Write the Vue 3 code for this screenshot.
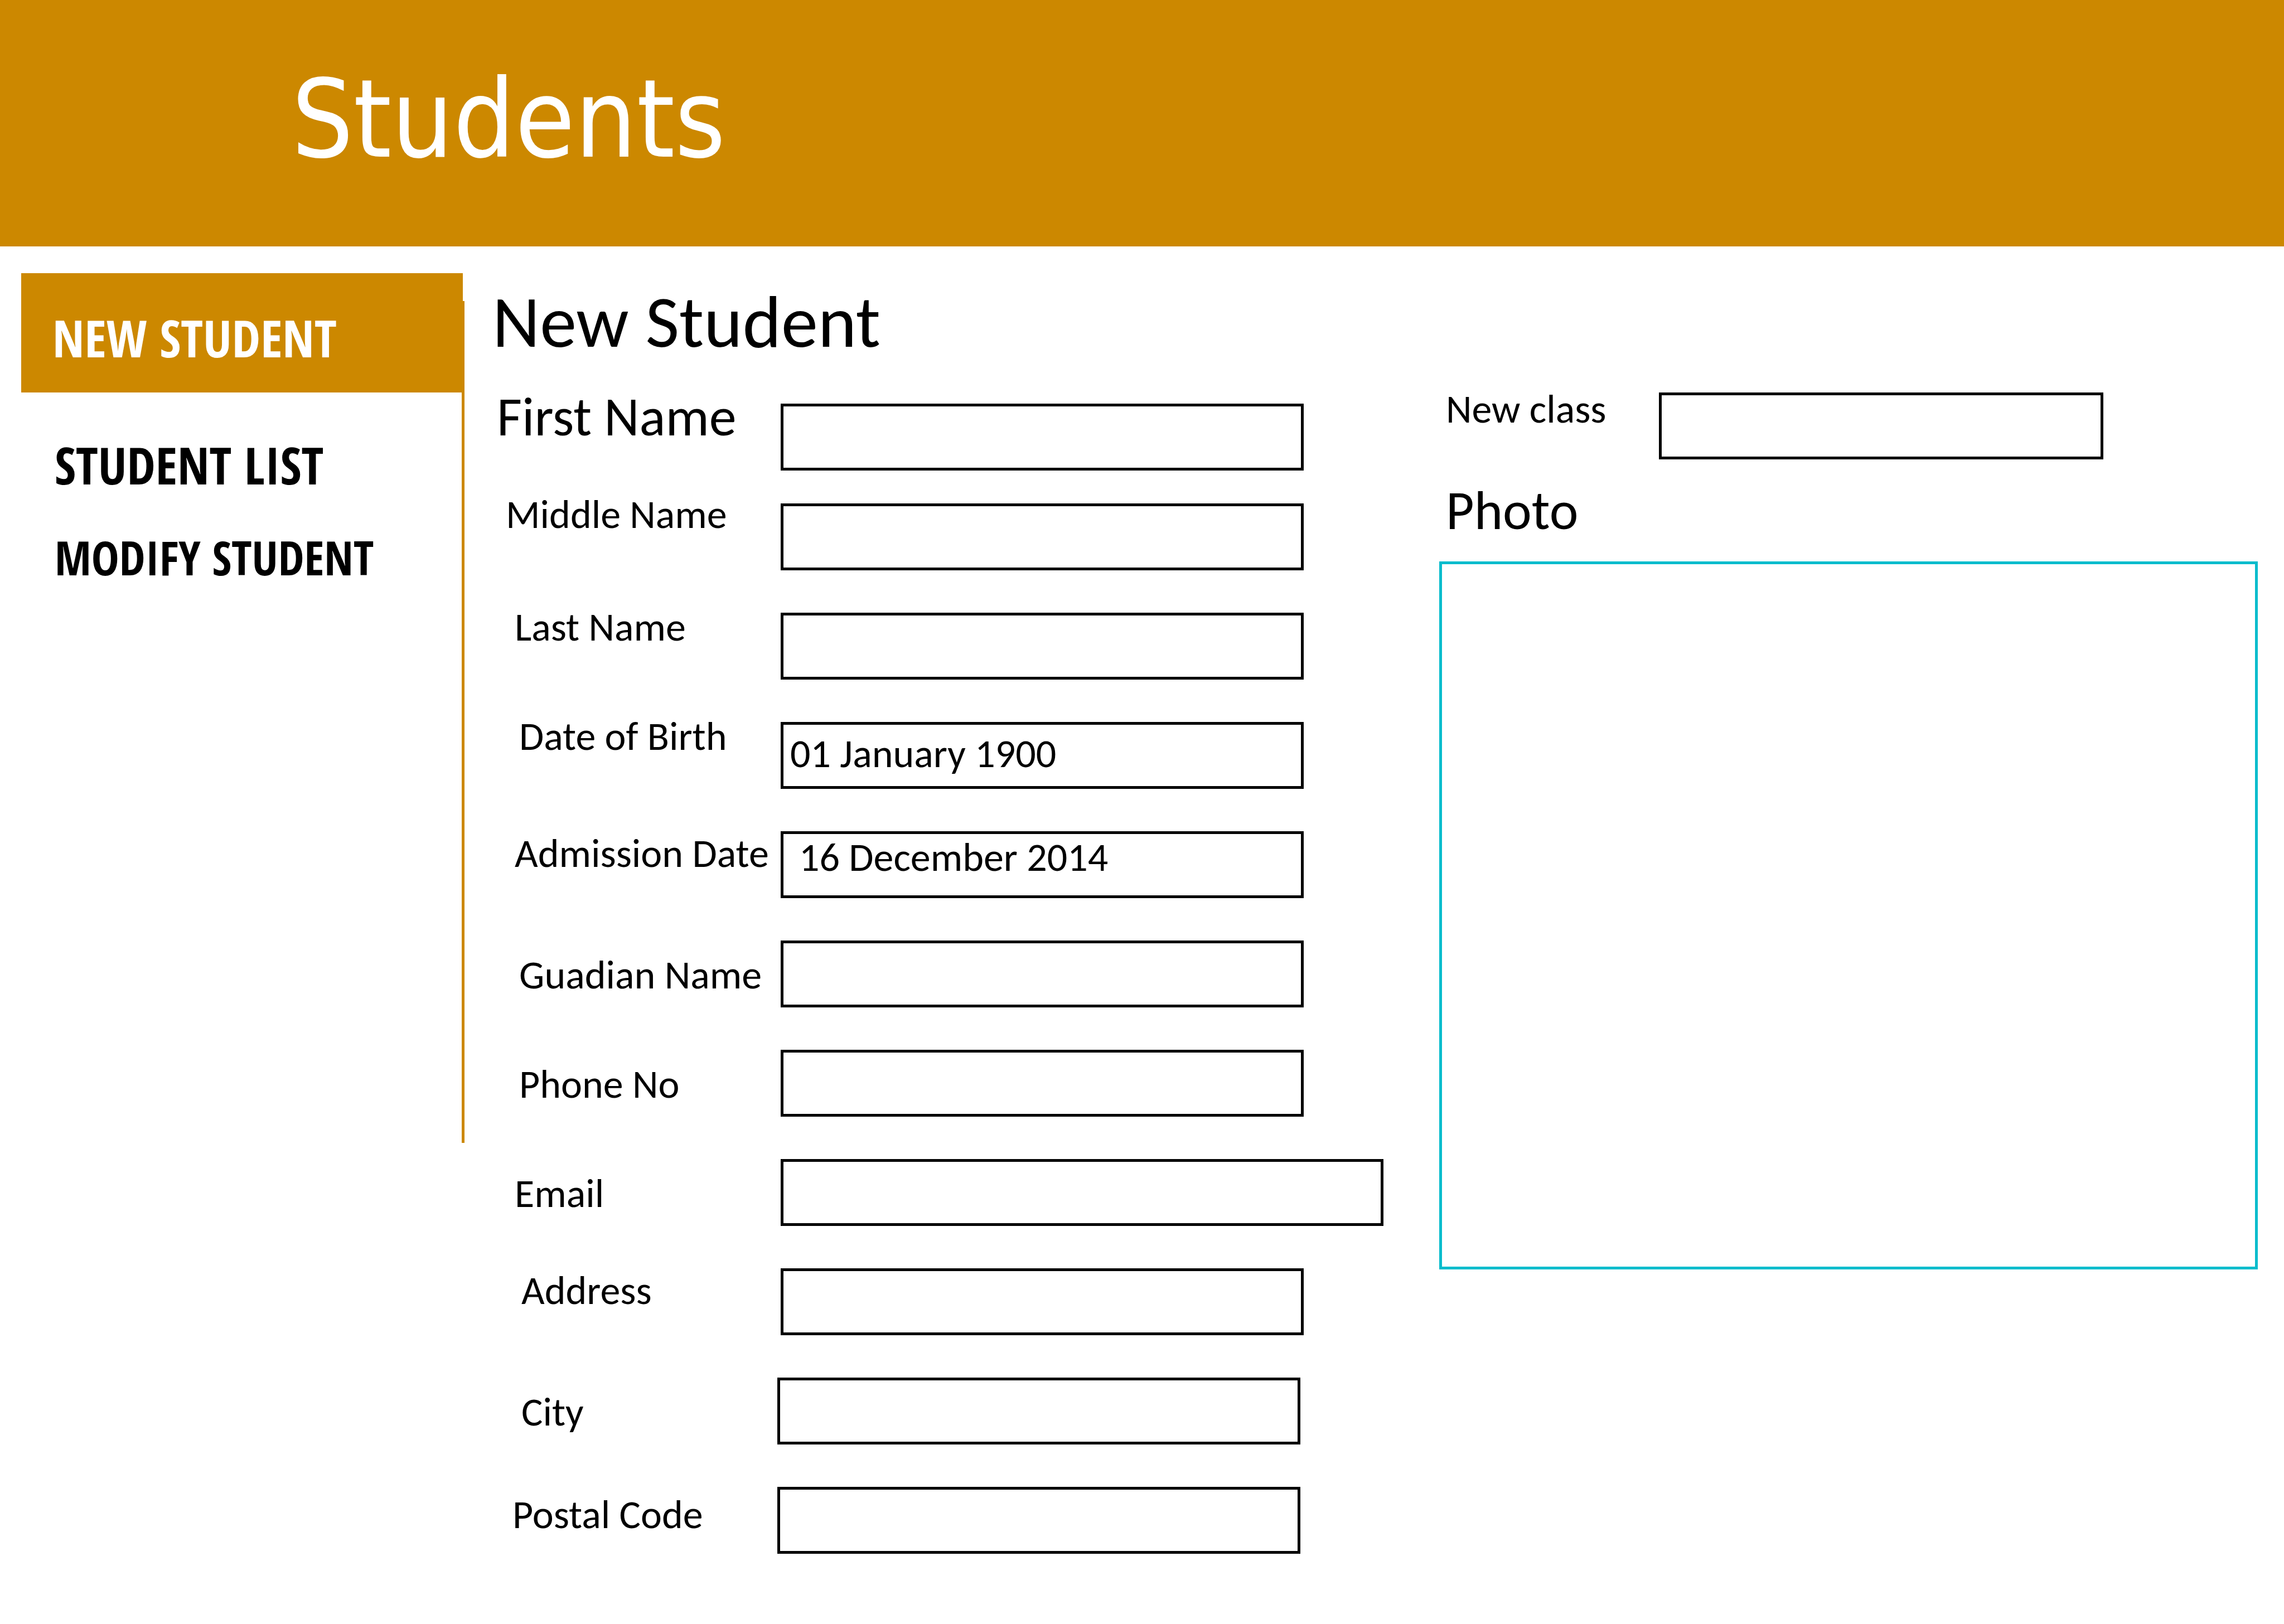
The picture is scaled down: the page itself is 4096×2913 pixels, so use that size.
<script setup>
import { ref } from 'vue'

const links = ref([
  { name: 'NEW STUDENT', href: '#new', kind: 'active' },
  { name: 'STUDENT LIST', href: '#list', kind: 'large' },
  { name: 'MODIFY STUDENT', href: '#modify', kind: 'small' },
])

const fields = ref([
  { id: 'first', label: 'First Name', value: '', css: 'lead indent-1' },
  { id: 'middle', label: 'Middle Name', value: '', css: 'indent-2' },
  { id: 'last', label: 'Last Name', value: '', css: 'indent-4 drop-1' },
  { id: 'birth', label: 'Date of Birth', value: '01 January 1900', css: 'indent-5 drop-1' },
  { id: 'admission', label: 'Admission Date', value: '16 December 2014', css: 'indent-4 drop-3 inset' },
  { id: 'guardian', label: 'Guadian Name', value: '', css: 'indent-5 drop-5' },
  { id: 'phone', label: 'Phone No', value: '', css: 'indent-5 drop-5' },
  { id: 'email', label: 'Email', value: '', css: 'indent-4 drop-5 wide' },
  { id: 'address', label: 'Address', value: '', css: 'indent-6 drop-3' },
  { id: 'city', label: 'City', value: '', css: 'indent-6 drop-5 outdent' },
  { id: 'postal', label: 'Postal Code', value: '', css: 'indent-3 drop-4 outdent' },
])

const newClass = ref('')
</script>

<template>
  <div class="page">
    <header class="banner">
      <h1>Students</h1>
    </header>

    <div class="body">
      <aside class="sidebar">
        <nav>
          <a v-for="link in links" :key="link.name" :href="link.href" :class="link.kind">{{ link.name }}</a>
        </nav>
        <div class="divider"></div>
      </aside>

      <form class="details" @submit.prevent>
        <h2>New Student</h2>
        <div class="fields">
          <div v-for="field in fields" :key="field.id" class="row" :class="field.css">
            <label :for="field.id">{{ field.label }}</label>
            <input :id="field.id" v-model="field.value" type="text" />
          </div>
        </div>
      </form>

      <section class="extra">
        <div class="row class-row">
          <label for="class">New class</label>
          <input id="class" v-model="newClass" type="text" />
        </div>
        <figure>
          <figcaption>Photo</figcaption>
          <div class="photo"></div>
        </figure>
      </section>
    </div>
  </div>
</template>

<style>
body {
  margin: 0;
  background: #fff;
}
</style>

<style scoped>
.page {
  color: #000;
  font-family: Carlito, Calibri, 'Open Sans', sans-serif;
  font-size: 72px;
}

.banner {
  display: flex;
  align-items: center;
  box-sizing: border-box;
  height: 442px;
  padding: 0 0 14px 523px;
  background: #cc8800;
  color: #fff;
}

h1 {
  margin: 0;
  font-family: 'DejaVu Sans Condensed', 'DejaVu Sans', sans-serif;
  font-size: 194px;
  font-weight: 400;
  line-height: 240px;
}

.body {
  display: grid;
  grid-template-columns: 833px minmax(0, 1648fr) minmax(0, 1568fr);
  align-items: start;
  padding-right: 47px;
}

.sidebar {
  display: flex;
  align-items: flex-start;
  padding: 48px 0 0 38px;
}

nav {
  display: flex;
  flex: 1;
  flex-direction: column;
}

nav a {
  padding-left: 60px;
  color: #000;
  font-family: 'Open Sans Condensed', 'Roboto Condensed', 'Open Sans', sans-serif;
  font-size: 92px;
  font-weight: 700;
  line-height: 100px;
  text-decoration: none;
  white-space: nowrap;
}

nav .active {
  padding-top: 66px;
  padding-bottom: 48px;
  padding-left: 56px;
  background: #cc8800;
  color: #fff;
}

nav .large {
  margin-top: 80px;
}

nav .small {
  margin-top: 66px;
  font-size: 84px;
}

.divider {
  width: 5px;
  height: 1510px;
  margin: 50px 0 0 -2px;
  background: #cc8800;
}

.details {
  padding: 70px 0 0 50px;
}

h2 {
  margin: 0;
  font-size: 132px;
  font-weight: 400;
  line-height: 130px;
}

.fields {
  display: flex;
  flex-direction: column;
  gap: 76px;
  margin-top: 82px;
}

.row {
  display: grid;
  grid-template-columns: 517px 1fr 143px;
  align-items: start;
}

.row label {
  line-height: 38px;
  white-space: nowrap;
}

.row input {
  box-sizing: border-box;
  width: 100%;
  height: 120px;
  margin: 0;
  padding: 0 12px 8px;
  border: 5px solid #000;
  border-radius: 0;
  outline: none;
  background: #fff;
  color: #000;
  font: inherit;
}

.lead {
  margin-bottom: -17px;
}

.lead label {
  font-size: 98px;
  line-height: 48px;
}

.wide input {
  grid-column: 2 / 4;
}

.inset input {
  padding: 0 28px 28px;
}

.outdent {
  grid-template-columns: 511px 1fr 149px;
}

.indent-1 label { padding-left: 8px; }
.indent-2 label { padding-left: 24px; }
.indent-3 label { padding-left: 36px; }
.indent-4 label { padding-left: 40px; }
.indent-5 label { padding-left: 48px; }
.indent-6 label { padding-left: 52px; }

.drop-1 label { padding-top: 6px; }
.drop-3 label { padding-top: 20px; }
.drop-4 label { padding-top: 30px; }
.drop-5 label { padding-top: 42px; }

.extra {
  padding: 262px 0 0 100px;
}

.class-row {
  grid-template-columns: 394px 1fr 277px;
}

.class-row label {
  padding: 10px 0 0 12px;
}

figure {
  margin: 43px 0 0;
}

figcaption {
  padding-left: 12px;
  font-size: 98px;
  line-height: 98px;
}

.photo {
  box-sizing: border-box;
  height: 1270px;
  margin-top: 42px;
  border: 5px solid #05bccc;
}
</style>
